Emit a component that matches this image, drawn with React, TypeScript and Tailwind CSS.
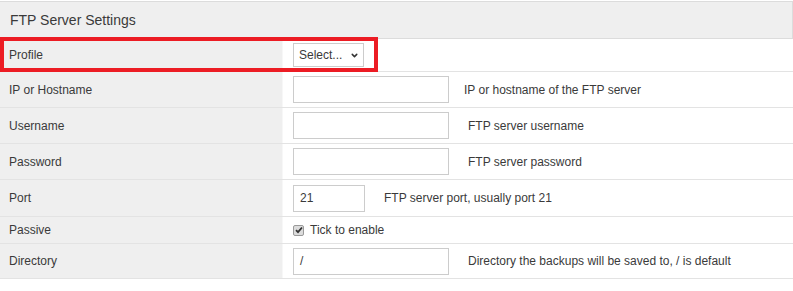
import { ChevronDown } from 'lucide-react'

// ── Row data ──────────────────────────────────────────────────────────────────

type Field =
  | { kind: 'select' }
  | { kind: 'input'; width: number; value?: string; help: string; gap: string }
  | { kind: 'check'; help: string }

interface Row {
  label: string
  height: string
  field: Field
}

const rows: Row[] = [
  { label: 'Profile', height: 'h-[33px]', field: { kind: 'select' } },
  {
    label: 'IP or Hostname',
    height: 'h-[36px]',
    field: { kind: 'input', width: 156, help: 'IP or hostname of the FTP server', gap: 'ml-[15px]' },
  },
  {
    label: 'Username',
    height: 'h-[36px]',
    field: { kind: 'input', width: 156, help: 'FTP server username', gap: 'ml-[19px]' },
  },
  {
    label: 'Password',
    height: 'h-[36px]',
    field: { kind: 'input', width: 156, help: 'FTP server password', gap: 'ml-[19px]' },
  },
  {
    label: 'Port',
    height: 'h-[37px]',
    field: { kind: 'input', width: 72, value: '21', help: 'FTP server port, usually port 21', gap: 'ml-[19px]' },
  },
  { label: 'Passive', height: 'h-[27px]', field: { kind: 'check', help: 'Tick to enable' } },
  {
    label: 'Directory',
    height: 'h-[35px]',
    field: {
      kind: 'input',
      width: 156,
      value: '/',
      help: 'Directory the backups will be saved to, / is default',
      gap: 'ml-[19px]',
    },
  },
]

// ── Field renderers ───────────────────────────────────────────────────────────

function FieldCell({ field }: { field: Field }) {
  if (field.kind === 'select') {
    return (
      <div className="flex h-[24px] w-[71px] items-center justify-between border border-[#cccccc] bg-white pl-[5px] pr-[4px] text-[12px] text-[#3a3a3a]">
        <span>Select...</span>
        <ChevronDown size={9} strokeWidth={4} className="text-[#333]" />
      </div>
    )
  }

  if (field.kind === 'check') {
    return (
      <div className="flex items-center">
        <span className="flex h-[11px] w-[11px] items-center justify-center rounded-[2px] border border-[#9a9a9a] bg-[#dcdcdc]">
          <svg width="8" height="8" viewBox="0 0 8 8">
            <path d="M1 4.2 L3 6.2 L7 1.5" fill="none" stroke="#333" strokeWidth="1.8" />
          </svg>
        </span>
        <span className="ml-[6px] text-[12px] text-[#3a3a3a]">{field.help}</span>
      </div>
    )
  }

  return (
    <div className="flex items-center">
      <div
        className="flex h-[27px] items-center border border-[#cccccc] bg-white px-[6px] text-[12px] text-[#3a3a3a]"
        style={{ width: field.width }}
      >
        {field.value}
      </div>
      <span className={`${field.gap} text-[12px] text-[#3a3a3a]`}>{field.help}</span>
    </div>
  )
}

// ── Page ──────────────────────────────────────────────────────────────────────

export default function App() {
  return (
    <div
      className="relative w-[793px] bg-white pt-px"
      style={{ fontFamily: '"Liberation Sans", Arial, sans-serif' }}
    >
      <div className="flex h-[38px] items-center border-y border-r border-[#dcdcdc] bg-[#efefef] pl-[10px] text-[14px] text-[#3a3a3a]">
        FTP Server Settings
      </div>

      {rows.map((row) => (
        <div
          key={row.label}
          className={`grid grid-cols-[283px_1fr] border-b border-[#e3e3e3] ${row.height}`}
        >
          <div className="flex items-center border-r border-[#f7f7f7] bg-[#efefef] pl-[9px] text-[12px] text-[#3a3a3a]">
            {row.label}
          </div>
          <div className="flex items-center pl-[10px]">
            <FieldCell field={row.field} />
          </div>
        </div>
      ))}

      {/* highlight box round the Profile row */}
      <div className="pointer-events-none absolute left-0 top-[37px] h-[35px] w-[378px] border-4 border-[#ec1c24]" />
    </div>
  )
}
